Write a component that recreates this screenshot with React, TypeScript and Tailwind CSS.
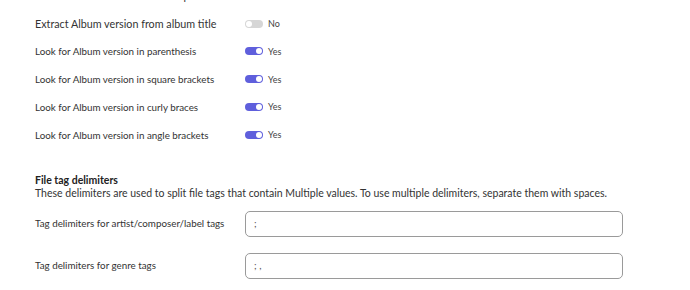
import React from "react";

function Toggle({ on }: { on: boolean }) {
  return (
    <div className="flex items-center gap-[5px]">
      <div
        className={
          "relative w-[18px] h-[8px] rounded-full " +
          (on ? "bg-[#5f5fdc]" : "bg-[#d6d6d6]")
        }
      >
        <div
          className={
            "absolute top-[1px] w-[6px] h-[6px] rounded-full bg-white " +
            (on ? "right-[1px]" : "left-[1px]")
          }
        />
      </div>
      <span className="text-[9px] text-[#444]">{on ? "Yes" : "No"}</span>
    </div>
  );
}

const rows: [string, boolean, string][] = [
  ["Extract Album version from file path", false, "text-[10.75px]"],
  ["Extract Album version from album title", false, "text-[10.75px]"],
  ["Look for Album version in parenthesis", true, "text-[9.8px]"],
  ["Look for Album version in square brackets", true, "text-[9.8px]"],
  ["Look for Album version in curly braces", true, "text-[9.8px]"],
  ["Look for Album version in angle brackets", true, "text-[9.8px]"],
];

export default function App() {
  return (
    <div
      className="w-[690px] h-[290px] overflow-hidden bg-white text-[#333] pl-[35px]"
      style={{ fontFamily: "Lato, 'Open Sans', sans-serif" }}
    >
      <div className="-mt-[18px] flex flex-col">
        {rows.map(([label, on, size]) => (
          <div key={label} className="flex items-center h-[27.8px]">
            <div className={"w-[210px] " + size}>{label}</div>
            <Toggle on={on} />
          </div>
        ))}
      </div>
      <div className="mt-[25px] text-[10.5px] leading-[13px]">
        <div className="font-bold text-[#222]">File tag delimiters</div>
        <div>
          These delimiters are used to split file tags that contain Multiple
          values. To use multiple delimiters, separate them with spaces.
        </div>
      </div>
      <div className="mt-[11px] flex flex-col gap-[16px]">
        {[
          ["Tag delimiters for artist/composer/label tags", ";"],
          ["Tag delimiters for genre tags", "; ,"],
        ].map(([label, val]) => (
          <div key={label} className="flex items-center">
            <div className="w-[210px] text-[9.8px]">{label}</div>
            <div className="w-[378px] h-[26px] border border-[#9a9a9a] rounded-[5px] flex items-center pl-[8px] text-[10px] text-[#555]">
              {val}
            </div>
          </div>
        ))}
      </div>
    </div>
  );
}
